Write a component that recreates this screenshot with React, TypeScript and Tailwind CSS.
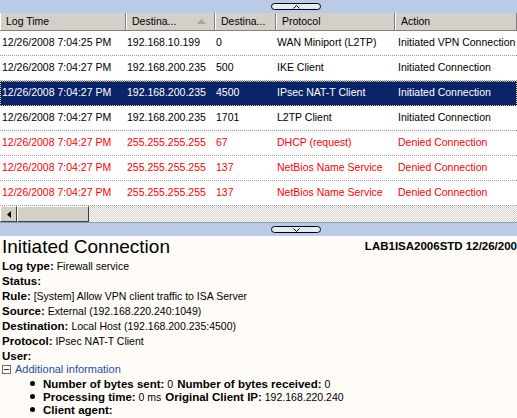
import React from 'react';

type Row = {
  time: string;
  ip: string;
  port: string;
  protocol: string;
  action: string;
  denied?: boolean;
  selected?: boolean;
};

const rows: Row[] = [
  { time: '12/26/2008 7:04:25 PM', ip: '192.168.10.199', port: '0', protocol: 'WAN Miniport (L2TP)', action: 'Initiated VPN Connection' },
  { time: '12/26/2008 7:04:27 PM', ip: '192.168.200.235', port: '500', protocol: 'IKE Client', action: 'Initiated Connection' },
  { time: '12/26/2008 7:04:27 PM', ip: '192.168.200.235', port: '4500', protocol: 'IPsec NAT-T Client', action: 'Initiated Connection', selected: true },
  { time: '12/26/2008 7:04:27 PM', ip: '192.168.200.235', port: '1701', protocol: 'L2TP Client', action: 'Initiated Connection' },
  { time: '12/26/2008 7:04:27 PM', ip: '255.255.255.255', port: '67', protocol: 'DHCP (request)', action: 'Denied Connection', denied: true },
  { time: '12/26/2008 7:04:27 PM', ip: '255.255.255.255', port: '137', protocol: 'NetBios Name Service', action: 'Denied Connection', denied: true },
  { time: '12/26/2008 7:04:27 PM', ip: '255.255.255.255', port: '137', protocol: 'NetBios Name Service', action: 'Denied Connection', denied: true },
];

function Pill({ down }: { down?: boolean }) {
  return (
    <div className="ml-[271px] flex h-[7px] w-[50px] items-center justify-center rounded-full border border-black bg-[#e4ebf6]">
      <svg width="7" height="4" viewBox="0 0 7 4" className="block">
        {down ? (
          <path d="M0.5 0.5 L3.5 3.5 L6.5 0.5" fill="none" stroke="black" strokeWidth="1" />
        ) : (
          <path d="M0.5 3.5 L3.5 0.5 L6.5 3.5" fill="none" stroke="black" strokeWidth="1" />
        )}
      </svg>
    </div>
  );
}

function HeaderCell({ label, w, sorted }: { label: string; w: string; sorted?: boolean }) {
  return (
    <div
      className={`${w} flex h-full shrink-0 items-center justify-between border-r border-r-[#808080] border-l border-l-white pl-[5px] pr-[8px]`}
    >
      <span className="truncate">{label}</span>
      {sorted && (
        <svg width="9" height="5" viewBox="0 0 9 5">
          <path d="M0 5 L4.5 0 L9 5 Z" fill="#a8a59c" />
        </svg>
      )}
    </div>
  );
}

function Field({ label, value }: { label: string; value?: string }) {
  return (
    <div className="h-[15px] whitespace-nowrap leading-[15px]">
      <span className="text-[11.5px] font-bold">{label}</span>
      {value && <span className="text-[10.5px]"> {value}</span>}
    </div>
  );
}

export default function App() {
  return (
    <div className="h-[418px] w-[517px] overflow-hidden bg-[#fffcf7] font-['Liberation_Sans',Arial,sans-serif] text-black">
      {/* top splitter */}
      <div className="flex h-[13px] items-center bg-[#b9cbe6]">
        <Pill />
      </div>

      {/* column headers */}
      <div className="flex h-[18px] border-b border-b-[#808080] bg-[#d4d0c8] text-[10.5px]">
        <HeaderCell label="Log Time" w="w-[126px]" />
        <HeaderCell label="Destina..." w="w-[89px]" sorted />
        <HeaderCell label="Destina..." w="w-[61px]" />
        <HeaderCell label="Protocol" w="w-[119px]" />
        <HeaderCell label="Action" w="w-[122px]" />
      </div>

      {/* rows */}
      <div className="bg-white text-[10.5px]">
        {rows.map((r, i) => (
          <div
            key={i}
            className={`flex h-[25px] items-center whitespace-nowrap border-b border-dotted ${
              r.selected
                ? 'border-b-[#0a246a] bg-[#0a246a] text-white outline-1 -outline-offset-1 outline-dotted outline-[#e8d27a]'
                : 'border-b-[#9a9a9a]'
            } ${r.denied ? 'text-[#ff0000]' : ''}`}
          >
            <div className="w-[127px] shrink-0 pl-[2px]">{r.time}</div>
            <div className="w-[89px] shrink-0">{r.ip}</div>
            <div className="w-[61px] shrink-0">{r.port}</div>
            <div className="w-[121px] shrink-0">{r.protocol}</div>
            <div className="shrink-0">{r.action}</div>
          </div>
        ))}
      </div>

      {/* horizontal scrollbar */}
      <div className="flex h-[16px] bg-[image:repeating-conic-gradient(#d4d0c8_0_25%,#ffffff_0_50%)] bg-[length:2px_2px]">
        <div className="flex w-[17px] items-center justify-center border border-t-white border-l-white border-r-[#404040] border-b-[#404040] bg-[#d4d0c8]">
          <svg width="4" height="7" viewBox="0 0 4 7">
            <path d="M4 0 L0 3.5 L4 7 Z" fill="black" />
          </svg>
        </div>
        <div className="w-[72px] border border-t-white border-l-white border-r-[#404040] border-b-[#404040] bg-[#d4d0c8]" />
      </div>

      {/* bottom splitter */}
      <div className="flex h-[14px] items-center border-t border-t-[#8a9ab5] bg-[#b9cbe6]">
        <Pill down />
      </div>

      {/* details */}
      <div className="pl-[2px] pt-[1px]">
        <div className="flex h-[20px] items-center justify-between whitespace-nowrap">
          <div className="text-[19px] leading-[20px]">Initiated Connection</div>
          <div className="text-[11.5px] font-bold">LAB1ISA2006STD 12/26/200</div>
        </div>
        <Field label="Log type:" value="Firewall service" />
        <Field label="Status:" />
        <Field label="Rule:" value="[System] Allow VPN client traffic to ISA Server" />
        <Field label="Source:" value="External (192.168.220.240:1049)" />
        <Field label="Destination:" value="Local Host (192.168.200.235:4500)" />
        <Field label="Protocol:" value="IPsec NAT-T Client" />
        <Field label="User:" />
        <div className="flex h-[15px] items-center gap-[4px] text-[11px] text-[#1c4ea0]">
          <svg width="9" height="9" viewBox="0 0 9 9" className="block">
            <rect x="0.5" y="0.5" width="8" height="8" fill="white" stroke="#6b6b6b" />
            <path d="M2 4.5 H7" stroke="#333" strokeWidth="1" />
          </svg>
          <span>Additional information</span>
        </div>
        <ul className="pl-[28px]">
          {[
            [['Number of bytes sent:', '0'], ['Number of bytes received:', '0']],
            [['Processing time:', '0 ms'], ['Original Client IP:', '192.168.220.240']],
            [['Client agent:', '']],
          ].map((parts, i) => (
            <li key={i} className="flex h-[13px] items-center whitespace-nowrap leading-[13px]">
              <span className="mr-[8px] inline-block h-[5px] w-[5px] rounded-full bg-black" />
              {parts.map(([l, v], j) => (
                <span key={j} className="mr-[4px]">
                  <span className="text-[11.5px] font-bold">{l}</span>
                  {v && <span className="text-[10.5px]"> {v}</span>}
                </span>
              ))}
            </li>
          ))}
        </ul>
      </div>
    </div>
  );
}
